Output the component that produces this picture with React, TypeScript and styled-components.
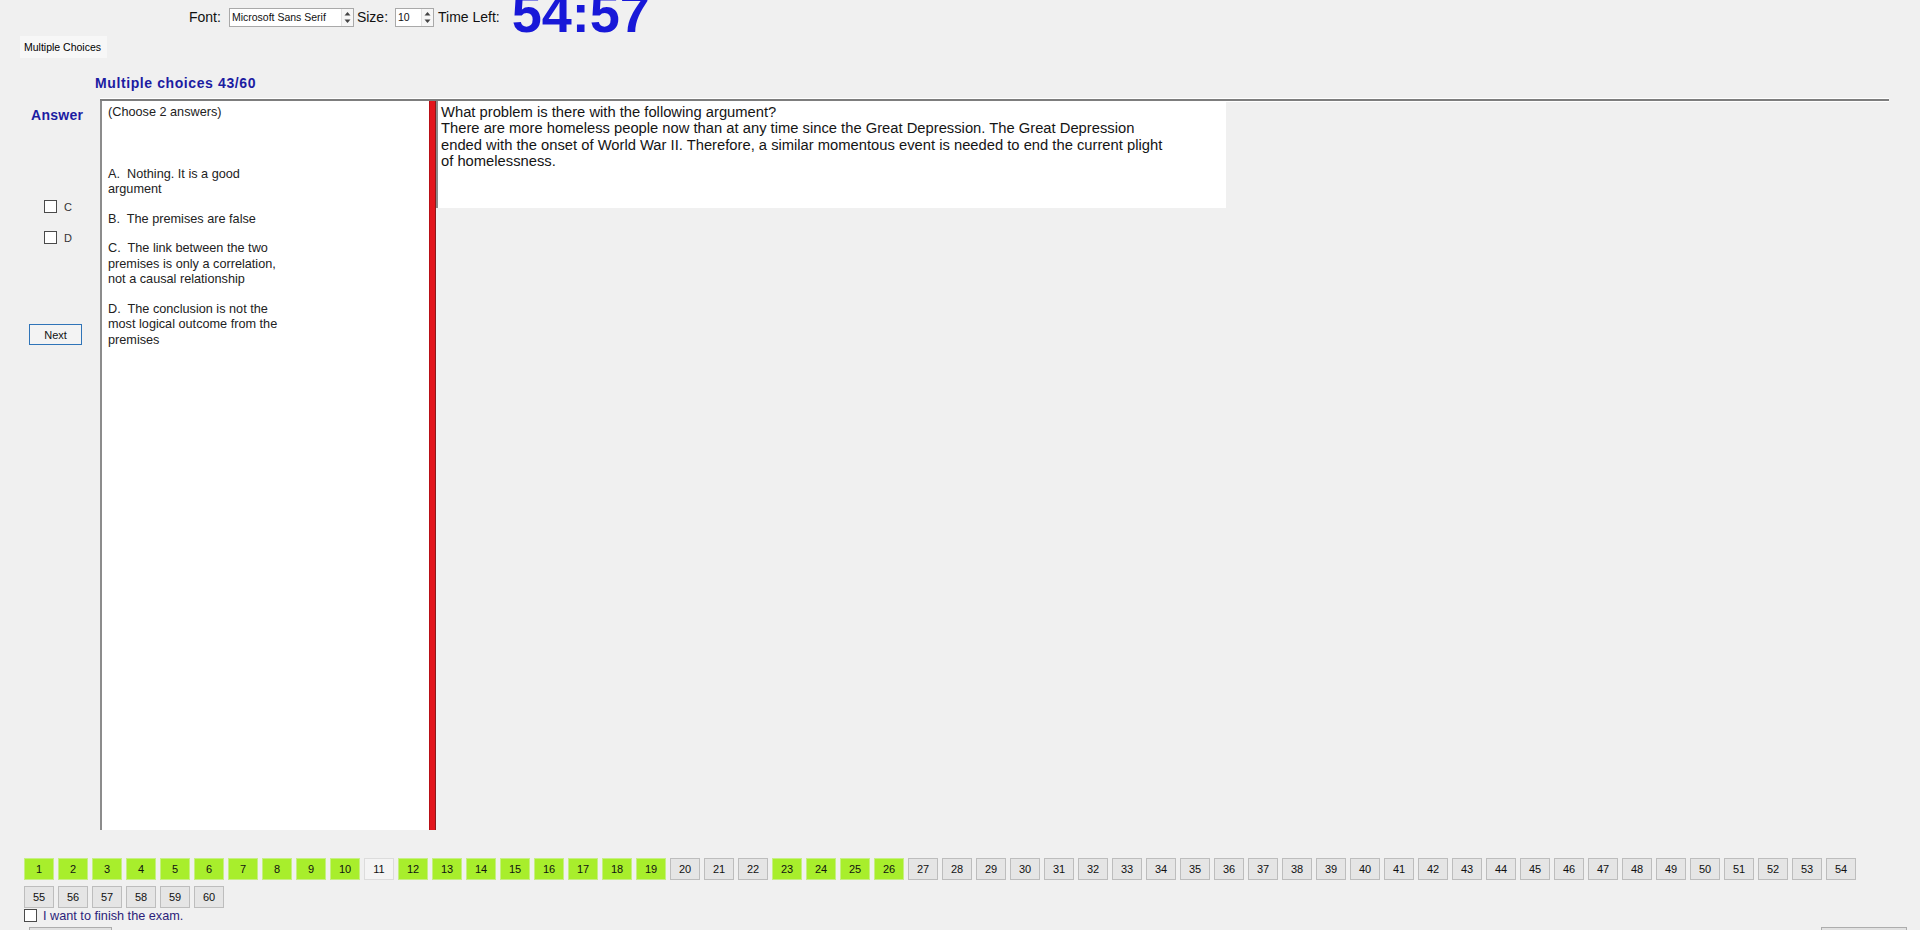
import React from "react";
import styled, { createGlobalStyle } from "styled-components";

const GlobalStyle = createGlobalStyle`
  html, body { margin: 0; padding: 0; background: #f0f0f0; }
  body { font-family: "Liberation Sans", Arial, sans-serif; color: #111; }
  * { box-sizing: border-box; }
`;

const Page = styled.div`
  width: 1920px;
  height: 930px;
  overflow: hidden;
  display: flex;
  flex-direction: column;
  background: #f0f0f0;
`;

const TopBar = styled.div`
  display: flex;
  align-items: center;
  height: 34px;
  padding-left: 189px;
  flex-shrink: 0;
`;

const TopLabel = styled.span<{ $ml: number }>`
  font-size: 14px;
  color: #111;
  margin-left: ${(p) => p.$ml}px;
  white-space: nowrap;
`;

const Combo = styled.div<{ $w: number; $ml: number }>`
  display: flex;
  align-items: center;
  width: ${(p) => p.$w}px;
  height: 19px;
  margin-left: ${(p) => p.$ml}px;
  background: #fff;
  border: 1px solid #a9a9a9;
`;

const ComboText = styled.span`
  flex: 1;
  font-size: 10.5px;
  padding-left: 2px;
  white-space: nowrap;
  overflow: hidden;
`;

const Spin = styled.div`
  width: 12px;
  height: 100%;
  display: flex;
  align-items: center;
  justify-content: center;
  border-left: 1px solid #e2e2e2;
  background: #f6f6f6;
`;

const Timer = styled.div`
  align-self: flex-start;
  margin-top: -14px;
  margin-left: 12px;
  font-size: 54px;
  font-weight: bold;
  line-height: 1;
  color: #1818d8;
  white-space: nowrap;
`;

const Tab = styled.div`
  margin: 2px 0 0 20px;
  width: 87px;
  height: 22px;
  display: flex;
  align-items: center;
  padding-left: 4px;
  background: #f7f7f7;
  font-size: 10.5px;
  color: #000;
  flex-shrink: 0;
`;

const Title = styled.div`
  margin: 17px 0 0 95px;
  height: 16px;
  line-height: 16px;
  font-size: 14px;
  font-weight: bold;
  letter-spacing: 0.6px;
  color: #1c1ca2;
  flex-shrink: 0;
`;

const Main = styled.div`
  margin-top: 8px;
  height: 731px;
  display: flex;
  flex-shrink: 0;
`;

const LeftCol = styled.div`
  width: 100px;
  display: flex;
  flex-direction: column;
  padding-top: 8px;
`;

const AnswerLabel = styled.div`
  margin-left: 31px;
  height: 16px;
  line-height: 16px;
  font-size: 14px;
  font-weight: bold;
  letter-spacing: 0.3px;
  color: #1c1ca2;
`;

const CheckRow = styled.div<{ $mt: number; $ml: number }>`
  display: flex;
  align-items: center;
  gap: 7px;
  margin-top: ${(p) => p.$mt}px;
  margin-left: ${(p) => p.$ml}px;
  height: 13px;
`;

const Box = styled.span`
  width: 13px;
  height: 13px;
  border: 1px solid #4a4a4a;
  background: #fff;
  flex-shrink: 0;
`;

const SmallLabel = styled.span`
  font-size: 11px;
  color: #333;
`;

const FinishLabel = styled.span`
  font-size: 12.7px;
  color: #2c1e7a;
  white-space: nowrap;
`;

const NextButton = styled.button`
  margin: 80px 0 0 29px;
  width: 53px;
  height: 21px;
  padding: 0;
  border: 1px solid #2f74b8;
  background: #f3f3f3;
  font-family: "Liberation Sans", Arial, sans-serif;
  font-size: 11px;
  color: #111;
`;

const SplitPanel = styled.div`
  width: 1789px;
  height: 100%;
  display: flex;
  border-top: 2px solid #7d7d7d;
  box-shadow: 0 -1px 0 #ffffff;
  background: linear-gradient(#ffffff 0 1px, transparent 1px);
`;

const AnswerPanel = styled.div`
  width: 329px;
  height: 100%;
  background: #fff;
  border-left: 2px solid #8c8c8c;
  padding: 4px 0 0 6px;
  font-size: 12.7px;
  line-height: 15.5px;
  color: #222;
`;

const Instr = styled.div`
  white-space: nowrap;
`;

const Choice = styled.div<{ $mt: number }>`
  margin-top: ${(p) => p.$mt}px;
  white-space: pre;
`;

const Splitter = styled.div`
  width: 7px;
  height: 100%;
  background: #e3161d;
  border-left: 1px solid #b80f16;
  border-right: 1px solid #8a1b1b;
`;

const RightPanel = styled.div`
  flex: 1;
  height: 100%;
`;

const QuestionBox = styled.div`
  width: 790px;
  height: 107px;
  background: #fff;
  border-left: 2px solid #8c8c8c;
  padding: 3px 0 0 3px;
  font-size: 14.75px;
  line-height: 16.4px;
  color: #151515;
  white-space: nowrap;
`;

const NumberGrid = styled.div`
  margin-top: 28px;
  padding-left: 24px;
  width: 1860px;
  display: flex;
  flex-wrap: wrap;
  row-gap: 6px;
  flex-shrink: 0;
`;

type Kind = "done" | "todo" | "plain";

const NumButton = styled.div<{ $kind: Kind }>`
  width: 30px;
  height: 22px;
  margin-right: 4px;
  display: flex;
  align-items: center;
  justify-content: center;
  font-size: 11px;
  color: #111;
  border: 1px solid
    ${(p) => (p.$kind === "done" ? "#c6ef84" : p.$kind === "todo" ? "#bdbdbd" : "#dcdcdc")};
  background: ${(p) =>
    p.$kind === "done" ? "#a8ee2c" : p.$kind === "todo" ? "#e5e5e5" : "#f4f4f4"};
`;

const FinishRow = styled.div`
  display: flex;
  align-items: center;
  gap: 6px;
  margin: 1px 0 0 24px;
  height: 13px;
  flex-shrink: 0;
`;

const BottomBar = styled.div`
  margin-top: 5px;
  display: flex;
  justify-content: space-between;
  padding: 0 13px 0 29px;
  flex-shrink: 0;
`;

const BottomButton = styled.div<{ $w: number }>`
  width: ${(p) => p.$w}px;
  height: 23px;
  border: 1px solid #adadad;
  background: #e1e1e1;
`;

const SpinArrows = () => (
  <svg width="7" height="13" viewBox="0 0 7 13">
    <polygon points="3.5,1 6.5,4.5 0.5,4.5" fill="#444" />
    <polygon points="3.5,12 6.5,8.5 0.5,8.5" fill="#444" />
  </svg>
);

const green = new Set([1, 2, 3, 4, 5, 6, 7, 8, 9, 10, 12, 13, 14, 15, 16, 17, 18, 19, 23, 24, 25, 26]);

const kindOf = (n: number): Kind => (green.has(n) ? "done" : n === 11 ? "plain" : "todo");

export default function App() {
  const nums = Array.from({ length: 60 }, (_, i) => i + 1);
  return (
    <>
      <GlobalStyle />
      <Page>
        <TopBar>
          <TopLabel $ml={0}>Font:</TopLabel>
          <Combo $w={125} $ml={8}>
            <ComboText>Microsoft Sans Serif</ComboText>
            <Spin>
              <SpinArrows />
            </Spin>
          </Combo>
          <TopLabel $ml={3}>Size:</TopLabel>
          <Combo $w={39} $ml={7}>
            <ComboText>10</ComboText>
            <Spin>
              <SpinArrows />
            </Spin>
          </Combo>
          <TopLabel $ml={4}>Time Left:</TopLabel>
          <Timer>54:57</Timer>
        </TopBar>
        <Tab>Multiple Choices</Tab>
        <Title>Multiple choices 43/60</Title>
        <Main>
          <LeftCol>
            <AnswerLabel>Answer</AnswerLabel>
            <CheckRow $mt={77} $ml={44}>
              <Box />
              <SmallLabel>C</SmallLabel>
            </CheckRow>
            <CheckRow $mt={18} $ml={44}>
              <Box />
              <SmallLabel>D</SmallLabel>
            </CheckRow>
            <NextButton>Next</NextButton>
          </LeftCol>
          <SplitPanel>
            <AnswerPanel>
              <Instr>(Choose 2 answers)</Instr>
              <Choice $mt={46}>
                {"A.  Nothing. It is a good"}
                <br />
                {"argument"}
              </Choice>
              <Choice $mt={14}>{"B.  The premises are false"}</Choice>
              <Choice $mt={14}>
                {"C.  The link between the two"}
                <br />
                {"premises is only a correlation,"}
                <br />
                {"not a causal relationship"}
              </Choice>
              <Choice $mt={14}>
                {"D.  The conclusion is not the"}
                <br />
                {"most logical outcome from the"}
                <br />
                {"premises"}
              </Choice>
            </AnswerPanel>
            <Splitter />
            <RightPanel>
              <QuestionBox>
                What problem is there with the following argument?
                <br />
                There are more homeless people now than at any time since the Great Depression. The Great Depression
                <br />
                ended with the onset of World War II. Therefore, a similar momentous event is needed to end the current plight
                <br />
                of homelessness.
              </QuestionBox>
            </RightPanel>
          </SplitPanel>
        </Main>
        <NumberGrid>
          {nums.map((n) => (
            <NumButton key={n} $kind={kindOf(n)}>
              {n}
            </NumButton>
          ))}
        </NumberGrid>
        <FinishRow>
          <Box />
          <FinishLabel>I want to finish the exam.</FinishLabel>
        </FinishRow>
        <BottomBar>
          <BottomButton $w={83} />
          <BottomButton $w={86} />
        </BottomBar>
      </Page>
    </>
  );
}
